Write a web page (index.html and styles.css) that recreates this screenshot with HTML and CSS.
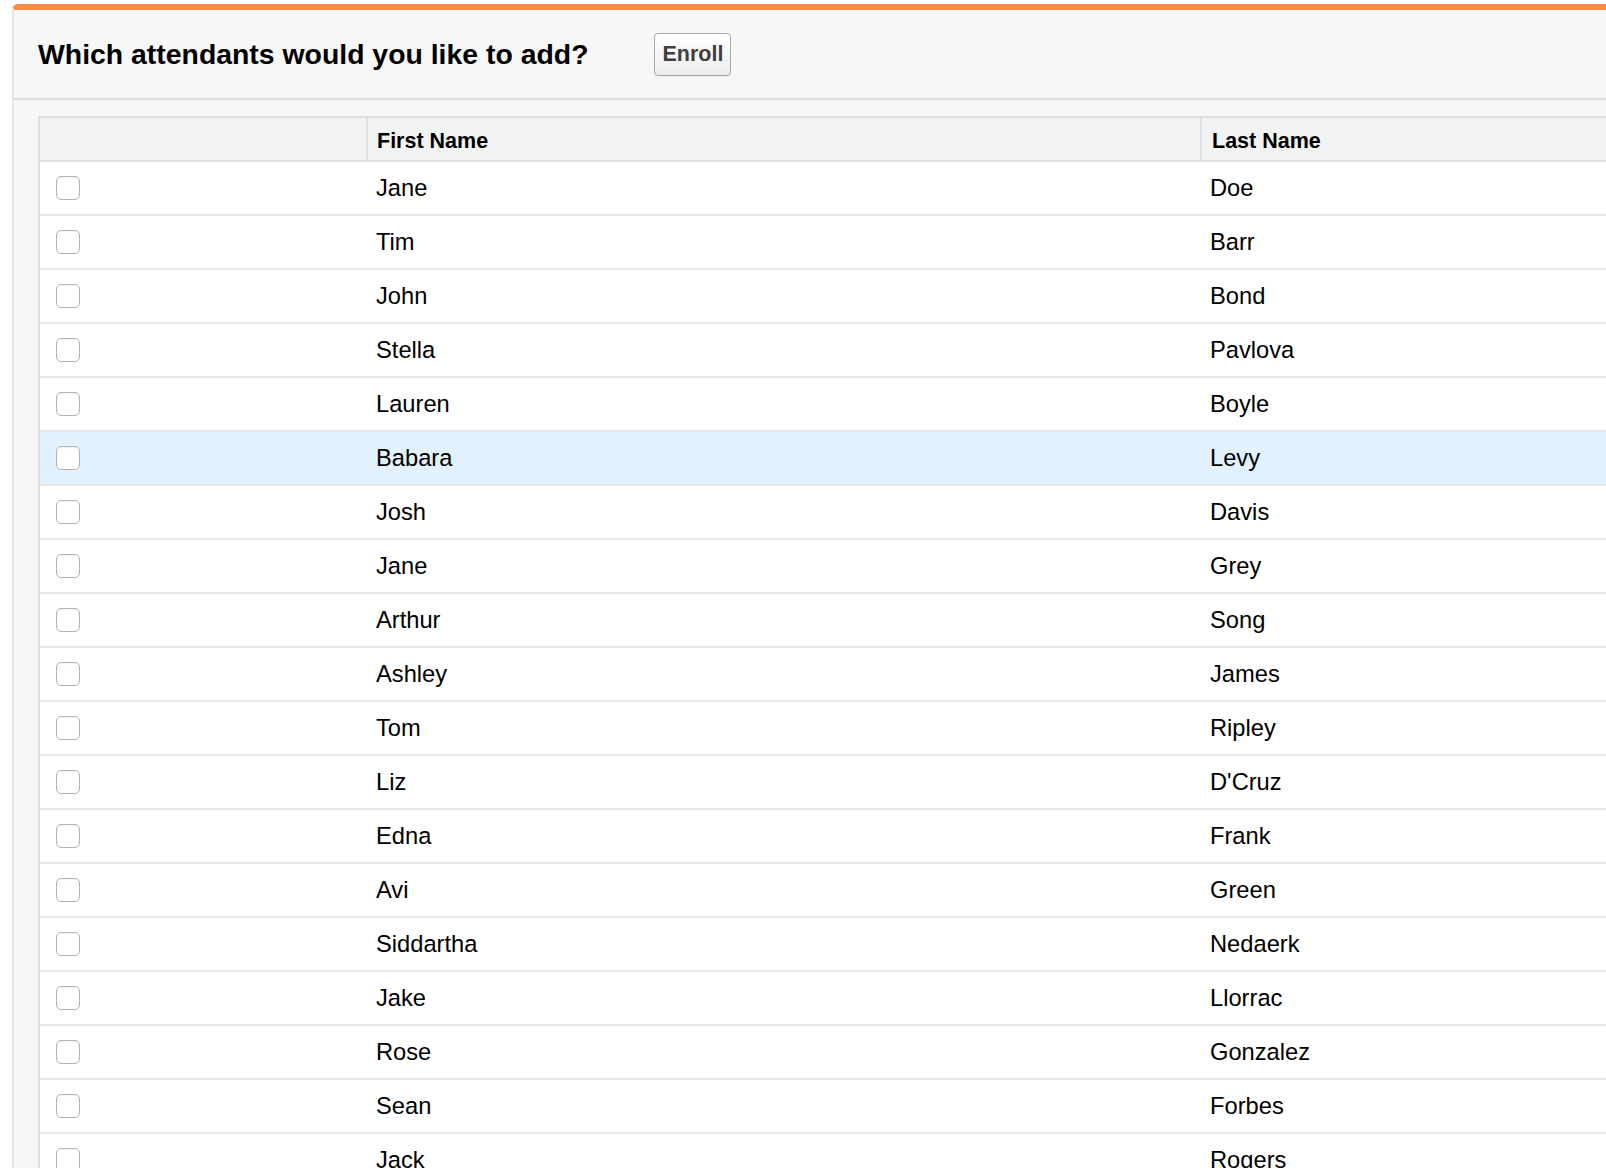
FILE: index.html
```html
<!DOCTYPE html>
<html lang="en">
<head>
<meta charset="utf-8">
<title>Enroll attendants</title>
<link rel="stylesheet" href="styles.css">
</head>
<body>
<div class="panel">
  <div class="panel-header">
    <h2 class="panel-title">Which attendants would you like to add?</h2>
    <button class="btn" type="button">Enroll</button>
  </div>
  <div class="panel-body">
    <div class="grid" role="table">
      <div class="row head" role="row">
        <div class="cell check" role="columnheader"></div>
        <div class="cell first" role="columnheader">First Name</div>
        <div class="cell last" role="columnheader">Last Name</div>
      </div>
      <div class="row"><div class="cell check"><input type="checkbox" class="cb"></div><div class="cell first">Jane</div><div class="cell last">Doe</div></div>
      <div class="row"><div class="cell check"><input type="checkbox" class="cb"></div><div class="cell first">Tim</div><div class="cell last">Barr</div></div>
      <div class="row"><div class="cell check"><input type="checkbox" class="cb"></div><div class="cell first">John</div><div class="cell last">Bond</div></div>
      <div class="row"><div class="cell check"><input type="checkbox" class="cb"></div><div class="cell first">Stella</div><div class="cell last">Pavlova</div></div>
      <div class="row"><div class="cell check"><input type="checkbox" class="cb"></div><div class="cell first">Lauren</div><div class="cell last">Boyle</div></div>
      <div class="row hover"><div class="cell check"><input type="checkbox" class="cb"></div><div class="cell first">Babara</div><div class="cell last">Levy</div></div>
      <div class="row"><div class="cell check"><input type="checkbox" class="cb"></div><div class="cell first">Josh</div><div class="cell last">Davis</div></div>
      <div class="row"><div class="cell check"><input type="checkbox" class="cb"></div><div class="cell first">Jane</div><div class="cell last">Grey</div></div>
      <div class="row"><div class="cell check"><input type="checkbox" class="cb"></div><div class="cell first">Arthur</div><div class="cell last">Song</div></div>
      <div class="row"><div class="cell check"><input type="checkbox" class="cb"></div><div class="cell first">Ashley</div><div class="cell last">James</div></div>
      <div class="row"><div class="cell check"><input type="checkbox" class="cb"></div><div class="cell first">Tom</div><div class="cell last">Ripley</div></div>
      <div class="row"><div class="cell check"><input type="checkbox" class="cb"></div><div class="cell first">Liz</div><div class="cell last">D'Cruz</div></div>
      <div class="row"><div class="cell check"><input type="checkbox" class="cb"></div><div class="cell first">Edna</div><div class="cell last">Frank</div></div>
      <div class="row"><div class="cell check"><input type="checkbox" class="cb"></div><div class="cell first">Avi</div><div class="cell last">Green</div></div>
      <div class="row"><div class="cell check"><input type="checkbox" class="cb"></div><div class="cell first">Siddartha</div><div class="cell last">Nedaerk</div></div>
      <div class="row"><div class="cell check"><input type="checkbox" class="cb"></div><div class="cell first">Jake</div><div class="cell last">Llorrac</div></div>
      <div class="row"><div class="cell check"><input type="checkbox" class="cb"></div><div class="cell first">Rose</div><div class="cell last">Gonzalez</div></div>
      <div class="row"><div class="cell check"><input type="checkbox" class="cb"></div><div class="cell first">Sean</div><div class="cell last">Forbes</div></div>
      <div class="row"><div class="cell check"><input type="checkbox" class="cb"></div><div class="cell first">Jack</div><div class="cell last">Rogers</div></div>
    </div>
  </div>
</div>
</body>
</html>
```
FILE: styles.css
```css
html, body {
  margin: 0;
  padding: 0;
  background: #ffffff;
  overflow: hidden;
  font-family: "Liberation Sans", Arial, Helvetica, sans-serif;
  color: #000;
}

.panel {
  margin: 4px -240px 0 12px;
  background: #f7f7f7;
  border-top: 6px solid #ff8a45;
  border-left: 2px solid #e5e5e5;
  border-top-left-radius: 6px;
  min-height: 1300px;
}

.panel-header {
  display: flex;
  align-items: center;
  height: 88px;
  padding-left: 24px;
  border-bottom: 2px solid #dedede;
}

.panel-title {
  margin: 0;
  font-size: 28.4px;
  font-weight: bold;
  line-height: 1;
  color: #000;
}

.btn {
  margin-left: 66px;
  width: 77px;
  height: 43px;
  padding: 0;
  box-sizing: border-box;
  border: 1px solid #a9a9a9;
  border-radius: 4px;
  background: linear-gradient(#ffffff, #ededed);
  font-family: "Liberation Sans", Arial, Helvetica, sans-serif;
  font-size: 21.5px;
  font-weight: bold;
  color: #3e3e3e;
  box-shadow: 0 1px 0 rgba(0,0,0,0.05);
}

.panel-body {
  padding: 16px 0 0 24px;
}

.grid {
  border-top: 2px solid #dde0e3;
  border-left: 2px solid #dde0e3;
  background: #ffffff;
}

.row {
  display: grid;
  grid-template-columns: 326px 834px 1fr;
  height: 54px;
  box-sizing: border-box;
  border-bottom: 2px solid #e8e8e8;
  font-size: 23.7px;
}

.row.head {
  height: 44px;
  background: #f1f2f2;
  border-bottom: 2px solid #dde0e3;
  font-size: 21.5px;
  font-weight: bold;
}

.row.head .cell {
  padding-top: 4px;
  padding-left: 9px;
}

.row.head .first,
.row.head .last {
  border-left: 2px solid #dde0e3;
}

.row.head .last {
  padding-left: 10px;
}

.row.hover {
  background: #e1f1fd;
}

.cell {
  display: flex;
  align-items: center;
  box-sizing: border-box;
  padding-left: 8px;
}

.row:not(.head) .first,
.row:not(.head) .last {
  padding-left: 10px;
}

.cell.check {
  padding-left: 16px;
}

.cb {
  appearance: none;
  -webkit-appearance: none;
  margin: 0;
  width: 24px;
  height: 24px;
  box-sizing: border-box;
  border: 1.5px solid #b3b3b3;
  border-radius: 5px;
  background: #ffffff;
  box-shadow: inset 0 1px 2px rgba(0,0,0,0.06);
}
```
